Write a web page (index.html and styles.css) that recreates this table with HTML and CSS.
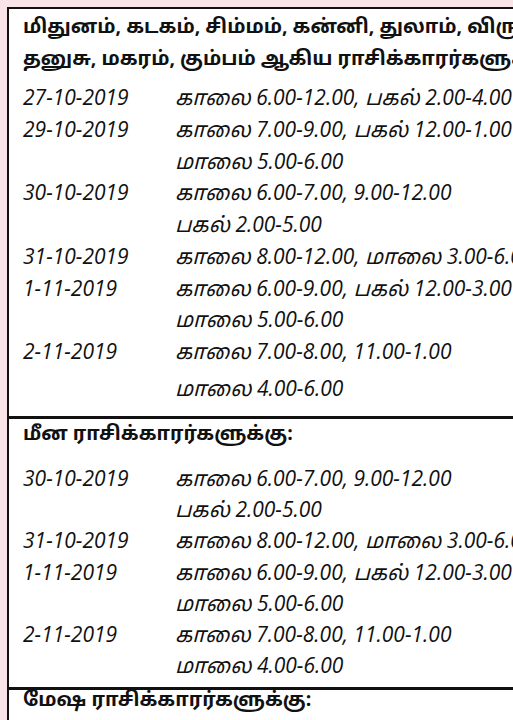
FILE: index.html
```html
<!DOCTYPE html>
<html lang="ta">
<head>
<meta charset="utf-8">
<link rel="stylesheet" href="styles.css">
</head>
<body>
<div class="sheet">
  <section class="group">
    <h2 class="head">
      <span class="hline">மிதுனம், கடகம், சிம்மம், கன்னி, துலாம், விருச்சிகம்,</span>
      <span class="hline">தனுசு, மகரம், கும்பம் ஆகிய ராசிக்காரர்களுக்கு:</span>
    </h2>
    <div class="rows first">
      <div class="date">27-10-2019</div><div class="time">காலை 6.00-12.00, பகல் 2.00-4.00</div>
      <div class="date">29-10-2019</div><div class="time">காலை 7.00-9.00, பகல் 12.00-1.00</div>
      <div class="date"></div><div class="time">மாலை 5.00-6.00</div>
      <div class="date">30-10-2019</div><div class="time">காலை 6.00-7.00, 9.00-12.00</div>
      <div class="date"></div><div class="time">பகல் 2.00-5.00</div>
      <div class="date">31-10-2019</div><div class="time">காலை 8.00-12.00, மாலை 3.00-6.00</div>
      <div class="date">1-11-2019</div><div class="time">காலை 6.00-9.00, பகல் 12.00-3.00</div>
      <div class="date"></div><div class="time">மாலை 5.00-6.00</div>
      <div class="date">2-11-2019</div><div class="time">காலை 7.00-8.00, 11.00-1.00</div>
      <div class="date"></div><div class="time last">மாலை 4.00-6.00</div>
    </div>
  </section>
  <section class="group">
    <h2 class="head single"><span class="hline">மீன ராசிக்காரர்களுக்கு:</span></h2>
    <div class="rows second">
      <div class="date">30-10-2019</div><div class="time">காலை 6.00-7.00, 9.00-12.00</div>
      <div class="date"></div><div class="time">பகல் 2.00-5.00</div>
      <div class="date">31-10-2019</div><div class="time">காலை 8.00-12.00, மாலை 3.00-6.00</div>
      <div class="date">1-11-2019</div><div class="time">காலை 6.00-9.00, பகல் 12.00-3.00</div>
      <div class="date"></div><div class="time">மாலை 5.00-6.00</div>
      <div class="date">2-11-2019</div><div class="time">காலை 7.00-8.00, 11.00-1.00</div>
      <div class="date"></div><div class="time">மாலை 4.00-6.00</div>
    </div>
  </section>
  <section class="group">
    <h2 class="head single tight"><span class="hline">மேஷ ராசிக்காரர்களுக்கு:</span></h2>
  </section>
</div>
</body>
</html>
```
FILE: styles.css
```css
html, body {
  margin: 0;
  padding: 0;
}
body {
  background: #f9e4ea;
  width: 513px;
  height: 720px;
  overflow: hidden;
  padding: 7px 0 0 7px;
  box-sizing: border-box;
  font-family: "Noto Sans Tamil", "Lohit Tamil", "Noto Sans", "Open Sans", sans-serif;
  color: #111;
}
.sheet {
  width: 620px;
  height: 713px;
  overflow: hidden;
  background: #fff;
  border-left: 2px solid #111;
  border-top: 2px solid #111;
  box-sizing: border-box;
}
.group + .group {
  border-top: 3px solid #111;
}
.head {
  margin: 0;
  padding: 3px 0 6px 14px;
  font-size: 19.5px;
  font-weight: 700;
  white-space: nowrap;
  display: flex;
  flex-direction: column;
}
.hline {
  line-height: 32px;
}
.head.single {
  padding: 0 0 12px 14px;
}
.head.single.tight {
  padding: 0 0 0 14px;
}
.head.tight .hline {
  line-height: 22px;
}
.rows {
  display: grid;
  grid-template-columns: 152px 1fr;
  padding: 0 0 8px 14px;
  white-space: nowrap;
}
.date, .time {
  font-family: "Open Sans", "Noto Sans Tamil", "Lohit Tamil", sans-serif;
  font-style: italic;
  font-size: 21px;
  line-height: 31.75px;
  font-weight: 400;
}
.rows.second .date, .rows.second .time {
  line-height: 31.25px;
}
.rows.second {
  padding-bottom: 5px;
}
.time.last {
  line-height: 40px;
}
```
